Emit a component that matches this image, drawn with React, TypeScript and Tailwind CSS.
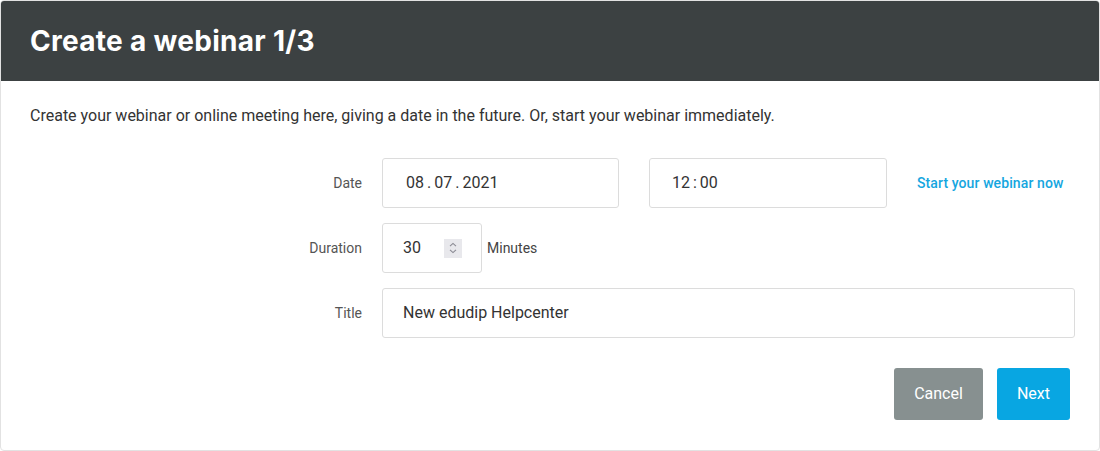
import React from 'react';

const Spinner = () => (
  <div className="w-[18px] h-[19px] bg-[#e8e8ec] flex items-center justify-center">
    <svg width="8" height="12" viewBox="0 0 8 12" fill="none" stroke="#8a8a93" strokeWidth="1.1">
      <path d="M1 4.2 L4 1.4 L7 4.2" />
      <path d="M1 7.8 L4 10.6 L7 7.8" />
    </svg>
  </div>
);

const Sep = ({ c }: { c: string }) => <span className="mx-[3px]">{c}</span>;

export default function App() {
  return (
    <div className="w-[1100px] h-[451px] bg-white" style={{ fontFamily: 'Roboto, "Liberation Sans", sans-serif' }}>
      <div className="h-full border border-[#e2e2e2] rounded-[4px] overflow-hidden flex flex-col">
        <div className="h-[80px] shrink-0 bg-[#3c4142] flex items-center px-[29px]">
          <h1 className="text-white text-[28px] font-bold tracking-[0.3px]" style={{ fontFamily: 'Inter, "Open Sans", sans-serif' }}>
            Create a webinar 1/3
          </h1>
        </div>

        <div className="px-[29px] pt-[25px]">
          <p className="text-[16px] text-[#333] leading-[20px]">
            Create your webinar or online meeting here, giving a date in the future. Or, start your webinar immediately.
          </p>

          <div className="mt-[32px] flex flex-col gap-[15px]">
            <div className="flex items-center">
              <label className="w-[332px] shrink-0 text-right text-[14px] text-[#555]">Date</label>
              <div className="ml-[20px] w-[237px] h-[50px] border border-[#dcdcdc] rounded-[3px] flex items-center pl-[23px] text-[16px] text-[#333]">
                08<Sep c="." />07<Sep c="." />2021
              </div>
              <div className="ml-[30px] w-[238px] h-[50px] border border-[#dcdcdc] rounded-[3px] flex items-center pl-[22px] text-[16px] text-[#333]">
                12<Sep c=":" />00
              </div>
              <a className="ml-[30px] text-[14px] font-medium tracking-[0.1px] text-[#15a6e0]">Start your webinar now</a>
            </div>

            <div className="flex items-center">
              <label className="w-[332px] shrink-0 text-right text-[14px] text-[#555]">Duration</label>
              <div className="ml-[20px] w-[100px] h-[50px] border border-[#dcdcdc] rounded-[3px] flex items-center pl-[20px] pr-[19px] justify-between text-[16px] text-[#333]">
                <span>30</span>
                <Spinner />
              </div>
              <span className="ml-[5px] text-[14px] text-[#444]">Minutes</span>
            </div>

            <div className="flex items-center">
              <label className="w-[332px] shrink-0 text-right text-[14px] text-[#555]">Title</label>
              <div className="ml-[20px] w-[693px] shrink-0 h-[50px] border border-[#dcdcdc] rounded-[3px] flex items-center pl-[20px] text-[16px] text-[#333]">
                New edudip Helpcenter
              </div>
            </div>
          </div>

          <div className="mt-[30px] flex justify-end gap-[14px]">
            <button className="w-[89px] h-[52px] rounded-[3px] bg-[#879090] text-white text-[16px]">Cancel</button>
            <button className="w-[73px] h-[52px] rounded-[3px] bg-[#08a6e2] text-white text-[16px]">Next</button>
          </div>
        </div>
      </div>
    </div>
  );
}
